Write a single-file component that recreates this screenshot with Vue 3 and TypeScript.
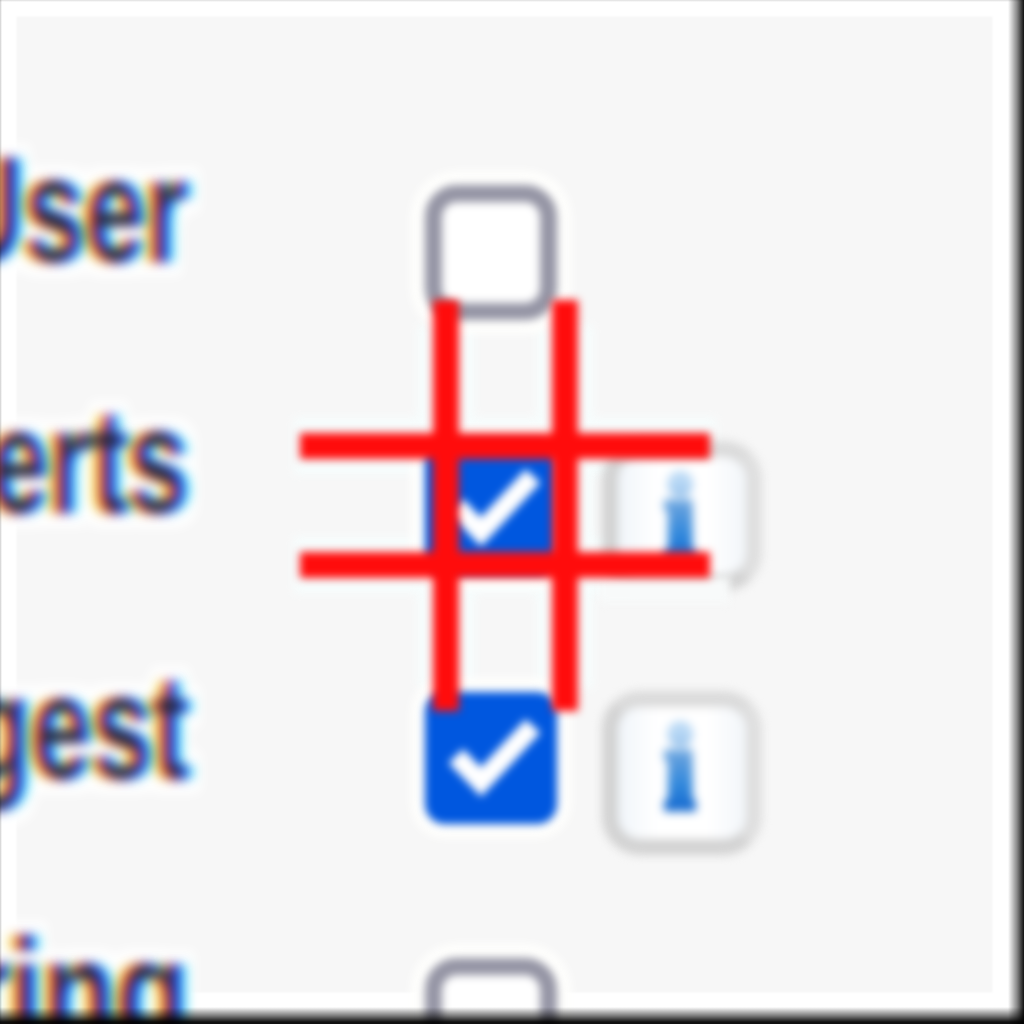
<script setup lang="ts">
interface Row {
  label: string
  checked: boolean
  info: boolean
  height: number
  labelTop: number
  stretch: number
  infoHeight: number
}

const rows: Row[] = [
  { label: 'User', checked: false, info: false, height: 257, labelTop: -60, stretch: 0.73, infoHeight: 0 },
  { label: 'Alerts', checked: true, info: true, height: 250, labelTop: -66, stretch: 0.73, infoHeight: 150 },
  { label: 'Digest', checked: true, info: true, height: 266, labelTop: -50, stretch: 0.73, infoHeight: 164 },
  { label: 'String', checked: false, info: false, height: 150, labelTop: -51, stretch: 0.8, infoHeight: 0 },
]
</script>

<template>
  <main class="panel">
    <svg class="defs" aria-hidden="true">
      <filter id="fringe" x="-10%" y="-20%" width="120%" height="140%" color-interpolation-filters="sRGB">
        <feMorphology in="SourceAlpha" operator="dilate" radius="14" result="wide" />
        <feGaussianBlur in="wide" stdDeviation="6" result="wideSoft" />
        <feFlood flood-color="#ffffff" flood-opacity="1" />
        <feComposite in2="wideSoft" operator="in" result="halo" />
        <feGaussianBlur in="SourceAlpha" stdDeviation="6" result="soft" />
        <feOffset in="soft" dx="-7" result="left" />
        <feOffset in="soft" dx="6" result="right" />
        <feFlood flood-color="#f2e040" />
        <feComposite in2="left" operator="in" result="yellow" />
        <feFlood flood-color="#f634f4" />
        <feComposite in2="soft" operator="in" result="magenta" />
        <feFlood flood-color="#28e4f6" />
        <feComposite in2="right" operator="in" result="cyan" />
        <feBlend in="yellow" in2="halo" mode="multiply" result="a" />
        <feBlend in="magenta" in2="a" mode="multiply" result="b" />
        <feBlend in="cyan" in2="b" mode="multiply" />
      </filter>
    </svg>
    <div class="margins"></div>
    <svg class="marks halo" viewBox="0 0 1024 1024">
      <path d="M446 325V688M565 325V688M294 446H716M294 565H716" />
    </svg>

    <section class="rows">
      <div v-for="row in rows" :key="row.label" class="row" :style="{ height: row.height + 'px' }">
        <div class="label" :style="{ marginTop: row.labelTop + 'px' }">
          <span :style="{ transform: `scaleX(${row.stretch})` }">{{ row.label }}</span>
        </div>
        <div class="box" :class="{ checked: row.checked }">
          <svg v-if="row.checked" viewBox="0 0 132 132">
            <path d="M31 64 L56 90 L108 34" />
          </svg>
        </div>
        <div v-if="row.info" class="info" :style="{ height: row.infoHeight + 'px' }"><span>i</span></div>
      </div>
    </section>

    <svg class="marks cover" viewBox="0 0 1024 1024">
      <path d="M600 590H730" />
    </svg>
    <svg class="marks lines" viewBox="0 0 1024 1024">
      <path d="M446 300V711M565 300V711M300 446H710M300 565H710" />
    </svg>
    <div class="edges"></div>
  </main>
</template>

<style>
body {
  margin: 0;
  overflow: hidden;
}
</style>

<style scoped>
.panel {
  position: relative;
  width: 1024px;
  height: 1024px;
  overflow: hidden;
  background: #f7f7f7;
}
.defs {
  position: absolute;
  width: 0;
  height: 0;
}
.rows {
  position: relative;
  padding-top: 185px;
}
.row {
  display: flex;
  align-items: flex-start;
}
.label {
  display: flex;
  justify-content: flex-end;
  flex: none;
  width: 188px;
  margin-right: 237px;
  font: bold 150px/170px "Liberation Sans", Arial, sans-serif;
  filter: url(#fringe);
}
.label span {
  flex: none;
  transform-origin: right center;
}
.box {
  flex: none;
  box-sizing: border-box;
  width: 132px;
  height: 135px;
  border: 17px solid #9494a4;
  border-radius: 32px;
  background: #fff;
  box-shadow: 0 0 4px 14px #fffffd;
  filter: blur(4.5px);
}
.box.checked {
  height: 132px;
  border: 0;
  border-radius: 20px;
  background: #0057df;
}
.box svg {
  display: block;
  width: 132px;
  height: 132px;
}
.box path {
  fill: none;
  stroke: #fff;
  stroke-width: 20;
}
.info {
  display: flex;
  justify-content: center;
  box-sizing: border-box;
  width: 160px;
  margin: -1px 0 0 45px;
  border: 16px solid #d2d2d2;
  border-right-color: #dedede;
  border-top-color: #dadada;
  border-radius: 38px;
  background: linear-gradient(90deg, #f0f5fa, #fff 30%, #fff 70%, #f2f6fa);
  filter: blur(5px);
}
.info span {
  height: 134px;
  margin-top: -6px;
  margin-right: 4px;
  font: bold 118px/134px "Liberation Serif", serif;
  color: transparent;
  -webkit-text-stroke: 8px transparent;
  background: linear-gradient(#b8d8f5 25%, #5e9ddd 43%, #3188dc 63%, #176bd0 80%);
  background-clip: text;
}
.marks {
  position: absolute;
  inset: 0;
  fill: none;
}
.cover {
  stroke: #f8fafa;
  stroke-width: 26;
  filter: blur(4px);
}
.halo {
  stroke: #f7ffff;
  stroke-width: 56;
  opacity: 0.8;
  filter: blur(5px);
}
.lines {
  stroke: #ff0c0c;
  stroke-width: 26;
  filter: blur(4.5px);
}
.margins {
  position: absolute;
  inset: 0;
  background:
    linear-gradient(90deg, #fff 0, #fff 15px, transparent 18px, transparent 991px, #fff 994px),
    linear-gradient(180deg, #fff 0, #fff 15px, transparent 18px, transparent 991px, #fff 994px);
}
.edges {
  position: absolute;
  inset: 0;
  background:
    linear-gradient(90deg, transparent 1008px, #0007 1017px, #000e 1024px),
    linear-gradient(180deg, transparent 1007px, #0008 1016px, #000e 1022px),
    linear-gradient(90deg, #0003 0, transparent 2px),
    linear-gradient(180deg, #0002 0, transparent 2px);
}
</style>
